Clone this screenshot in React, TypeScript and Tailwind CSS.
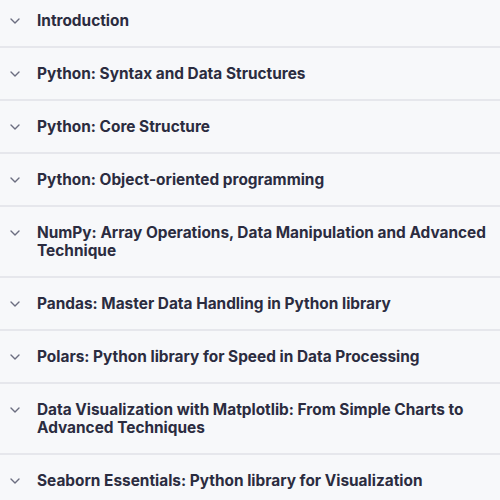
const sections = [
  'Introduction',
  'Python: Syntax and Data Structures',
  'Python: Core Structure',
  'Python: Object-oriented programming',
  'NumPy: Array Operations, Data Manipulation and Advanced Technique',
  'Pandas: Master Data Handling in Python library',
  'Polars: Python library for Speed in Data Processing',
  'Data Visualization with Matplotlib: From Simple Charts to Advanced Techniques',
  'Seaborn Essentials: Python library for Visualization',
];

function Chevron() {
  return (
    <svg width="10" height="6" viewBox="0 0 10 6" fill="none" className="shrink-0 mt-[6px]">
      <path d="M1 1l4 4 4-4" stroke="#6b6e80" strokeWidth="1.4" strokeLinecap="round" strokeLinejoin="round" />
    </svg>
  );
}

export default function App() {
  return (
    <div
      className="w-[500px] h-[500px] overflow-hidden bg-[#f7f8fa]"
      style={{ fontFamily: 'Inter, "Noto Sans", sans-serif' }}
    >
      <div className="-mt-[5.5px]">
        {sections.map((title) => (
          <div
            key={title}
            className="flex items-start gap-[17px] pl-[10px] pr-2 pt-[17.5px] pb-[15.5px] border-b-2 border-[#e6e7ec]"
          >
            <Chevron />
            <span className="text-[15.4px] leading-[18px] font-bold text-[#2b2c40]">
              {title}
            </span>
          </div>
        ))}
      </div>
    </div>
  );
}
